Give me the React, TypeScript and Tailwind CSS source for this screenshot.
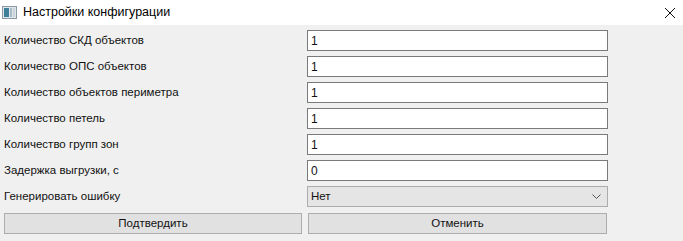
const rows: { label: string; value: string }[] = [
  { label: "Количество СКД объектов", value: "1" },
  { label: "Количество ОПС объектов", value: "1" },
  { label: "Количество объектов периметра", value: "1" },
  { label: "Количество петель", value: "1" },
  { label: "Количество групп зон", value: "1" },
  { label: "Задержка выгрузки, с", value: "0" },
];

function AppIcon() {
  return (
    <svg width="15" height="13" viewBox="0 0 15 13">
      <rect x="0.5" y="0.5" width="14" height="12" fill="#dfe6ea" stroke="#8a99a3" />
      <rect x="2" y="2" width="5" height="9" fill="#3f7f9a" />
      <rect x="8" y="2" width="2" height="9" fill="#a7bcc6" />
      <rect x="11" y="2" width="2" height="9" fill="#c9d5db" />
    </svg>
  );
}

export default function App() {
  return (
    <div
      className="w-[683px] h-[241px] bg-[#f0f0f0] flex flex-col text-black"
      style={{ fontFamily: '"Liberation Sans", Arial, sans-serif' }}
    >
      {/* TITLE BAR */}
      <div className="h-[25px] bg-white flex items-center pl-[2px] pr-[7px]">
        <AppIcon />
        <span className="ml-[6px] text-[12.5px] text-black">Настройки конфигурации</span>
        <svg className="ml-auto" width="12" height="12" viewBox="0 0 12 12">
          <path d="M1 1 L11 11 M11 1 L1 11" stroke="#111" strokeWidth="1" />
        </svg>
      </div>

      {/* FORM */}
      <div className="flex flex-col gap-[5px] pt-[5px] pl-[4px] text-[11.5px] text-[#111]">
        {rows.map((r) => (
          <div key={r.label} className="flex items-center h-[21px]">
            <div className="w-[303px]">{r.label}</div>
            <div className="w-[301px] h-[21px] bg-white border border-[#7a7a7a] flex items-center pl-[3px] text-[12px]">
              {r.value}
            </div>
          </div>
        ))}

        <div className="flex items-center h-[21px]">
          <div className="w-[303px]">Генерировать ошибку</div>
          <div className="w-[301px] h-[21px] bg-[#e5e5e5] border border-[#acacac] flex items-center pl-[3px] pr-[6px]">
            <span>Нет</span>
            <svg className="ml-auto" width="9" height="6" viewBox="0 0 9 6">
              <path d="M0.5 0.5 L4.5 4.5 L8.5 0.5" stroke="#555" fill="none" />
            </svg>
          </div>
        </div>

        <div className="flex items-center gap-[6px] mt-[1px]">
          <button className="w-[298px] h-[21px] bg-[#e1e1e1] border border-[#adadad]">
            Подтвердить
          </button>
          <button className="w-[299px] h-[21px] bg-[#e1e1e1] border border-[#adadad]">
            Отменить
          </button>
        </div>
      </div>
    </div>
  );
}
